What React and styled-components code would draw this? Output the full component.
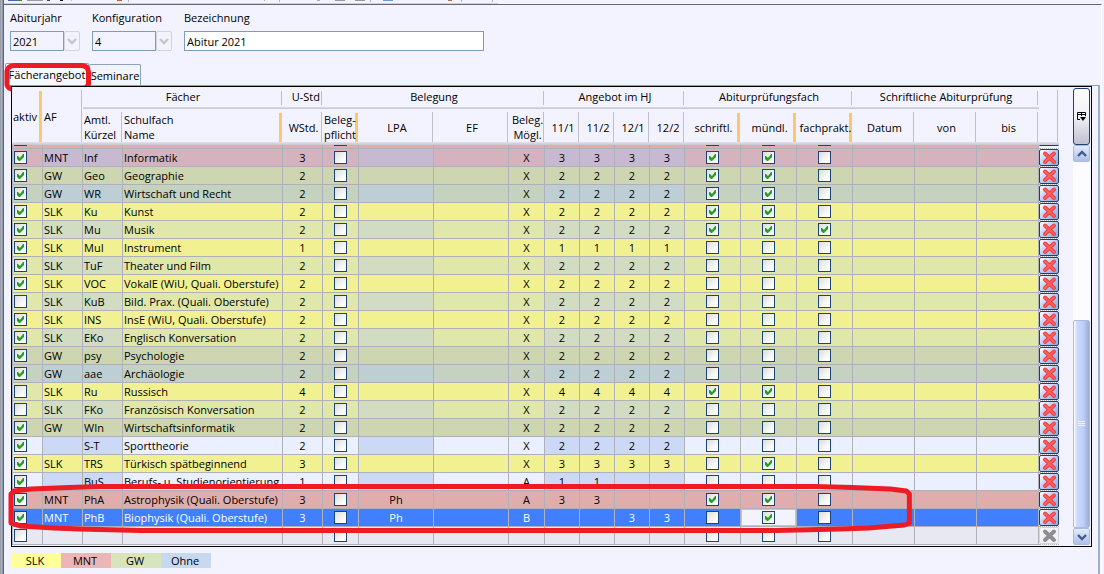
import React, { useState } from "react";
import styled, { createGlobalStyle, css } from "styled-components";

const GlobalStyle = createGlobalStyle`
  * {
    box-sizing: border-box;
  }

  body {
    margin: 0;
    background: #f3f3ff;
    color: #000;
    font-family: "Open Sans", "Noto Sans", sans-serif;
    font-size: 11px;
    line-height: 15px;
  }

  input, select, button {
    font: inherit;
    color: inherit;
  }
`;

const Page = styled.div`
  position: relative;
  display: flex;
  min-height: 100vh;
  overflow: hidden;
`;

const WindowEdge = styled.div`
  flex: none;
  width: 4px;
  background: linear-gradient(to right, #9c9ca4 1px, #a9b4cc 1px 2px, #8797b4 2px 3px, #5f6472 3px);
`;

const Main = styled.div`
  flex: 1;
  min-width: 0;
  display: flex;
  flex-direction: column;
`;

const Toolbar = styled.div`
  height: 4px;

  svg {
    display: block;
  }
`;

const Content = styled.div`
  flex: 1;
  display: flex;
  flex-direction: column;
  margin-right: 2px;
  padding-top: 5px;
  border-top: 1px solid #66666e;
  border-right: 1px solid #fff;
`;

const Form = styled.form`
  display: flex;
  gap: 12px;
  padding: 0 6px;
`;

const Field = styled.div`
  display: flex;
  flex-direction: column;
  gap: 6px;

  label {
    align-self: flex-start;
  }
`;

const Combo = styled.div`
  display: flex;
  height: 20px;
`;

const Select = styled.select`
  appearance: none;
  width: ${({ $width }) => $width}px;
  padding: 0 2px;
  border: 1px solid #7f9db9;
  border-radius: 0;
  background: #f3f3ff;
`;

const ComboArrow = styled.span`
  display: flex;
  align-items: center;
  justify-content: center;
  width: 16px;
  border: 1px solid #d3d3e0;
  border-radius: 2px;
  background: #f3f3fb;
`;

const TextInput = styled.input`
  width: 300px;
  height: 20px;
  padding: 0 2px;
  border: 1px solid #7f9db9;
  background: #fff;
`;

const Tabs = styled.div`
  position: relative;
  display: flex;
  align-items: flex-end;
  height: 22px;
  margin-top: 12px;
  padding-left: 1px;
`;

const Tab = styled.button`
  height: ${({ $active }) => ($active ? 22 : 21)}px;
  width: ${({ $active }) => ($active ? 84 : 52)}px;
  padding: 0;
  text-align: center;
  white-space: nowrap;
  border: 1px solid #8ba0bc;
  border-bottom: 0;
  border-radius: 2px 2px 0 0;
  background: ${({ $active }) => ($active ? "#f7f7ff" : "#f3f3fb")};
`;

const TabMark = styled.svg`
  position: absolute;
  top: -2px;
  left: -2px;
  pointer-events: none;
`;

const TabPanel = styled.div`
  flex: 1;
  margin: 0 1px;
  padding: 0 6px;
  border-top: 1px solid #8ba0bc;
  border-right: 2px solid #9fb0c8;
`;

const Frame = styled.div`
  position: relative;
  display: flex;
  padding-bottom: 1px;
  border: 1px solid #000;
`;

const RowMark = styled.svg`
  position: absolute;
  left: -5px;
  bottom: 12px;
  width: 84%;
  height: 52px;
  pointer-events: none;
`;

const Table = styled.table`
  flex: 1;
  min-width: 0;
  table-layout: fixed;
  border-collapse: separate;
  border-spacing: 0;
`;

const HeadCell = styled.th`
  height: 36px;
  padding: 0 0 0 1px;
  font-weight: normal;
  text-align: ${({ $left }) => ($left ? "left" : "center")};
  vertical-align: middle;
  white-space: nowrap;
  overflow: hidden;
  background:
    linear-gradient(#e4e4f0, #c4c4d2) left bottom / 100% 3px no-repeat,
    ${({ $mark }) =>
      $mark
        ? "linear-gradient(#ffc66b, #ffc66b) right 1px bottom 3px / 3px calc(100% - 7px) no-repeat"
        : "linear-gradient(#c0c0c8, #c0c0c8) right 1px bottom 3px / 1px calc(100% - 6px) no-repeat"},
    #f3f3ff;
`;

const GroupCell = styled(HeadCell)`
  height: 22px;
  padding: 0 0 4px;
  text-align: ${({ $narrow }) => ($narrow ? "right" : "center")};
  padding-right: ${({ $narrow }) => ($narrow ? 3 : 0)}px;
  background:
    linear-gradient(#c0c0c8, #c0c0c8) right 1px top 4px / 1px 14px no-repeat,
    linear-gradient(#d8d8e4, #c8c8d6) left bottom / 100% 2px no-repeat,
    #f3f3ff;
`;

const Cell = styled.td`
  height: 18px;
  padding: 0 1px;
  border-right: 1px solid #b0b0b8;
  border-bottom: 1px solid #b0b0b8;
  text-align: ${({ $center }) => ($center ? "center" : "left")};
  vertical-align: middle;
  white-space: nowrap;
  overflow: hidden;
  line-height: 17px;
  background: ${({ $bg }) => $bg};
  color: ${({ $selected }) => ($selected ? "#fff" : "#000")};

  &:first-child {
    border-left: 1px solid #b0b0b8;
  }

  ${({ $focus }) =>
    $focus &&
    css`
      box-shadow: inset 0 0 0 1px #c4c4d0;
    `}
`;

const DeleteCell = styled.td`
  height: 18px;
  padding: 0;
  border-bottom: 1px dotted #b0b0b8;
  background: #f3f3ff;
`;

const Sliver = styled.div`
  display: flex;
  flex-direction: column;
  justify-content: flex-end;
  align-items: ${({ $center }) => ($center ? "center" : "flex-start")};
  height: 3px;
  padding-bottom: 2px;
  overflow: hidden;
`;

const SliverRow = styled.tr`
  td {
    height: 4px;
    line-height: 0;
  }
`;

const Check = styled.input.attrs({ type: "checkbox" })`
  appearance: none;
  display: block;
  flex: none;
  width: 13px;
  height: 13px;
  margin: ${({ $left }) => ($left ? "0" : "0 auto")};
  border: 1px solid #1c4478;
  background: linear-gradient(135deg, #dcdcd8, #fff 80%);

  &:checked::after {
    content: "";
    display: block;
    width: 11px;
    height: 11px;
    background: #21a121;
    clip-path: polygon(2px 4px, 3px 4px, 5px 6px, 8px 2px, 9px 2px, 9px 5px, 5px 9px, 4px 9px, 2px 7px);
  }
`;

const DeleteButton = styled.button`
  display: flex;
  align-items: center;
  justify-content: center;
  width: 100%;
  height: 17px;
  padding: 0;
  border: 1px solid #1c3f74;
  border-radius: 2px;
  background: linear-gradient(135deg, #fff, #b9cbf0 50%, #8ea8dc);
  overflow: hidden;

  &:disabled {
    border-color: #d4d4dc;
    background: #f4f4f6;
  }
`;

const ScrollColumn = styled.div`
  flex: none;
  display: flex;
  flex-direction: column;
  width: 32px;
  padding: 1px 1px 0 14px;
`;

const ColumnButton = styled.button`
  display: flex;
  align-items: center;
  justify-content: center;
  height: 57px;
  padding: 0;
  border: 1px solid #1c3f74;
  border-radius: 3px;
  background: linear-gradient(#fff, #f0f0f6 50%, #c0c0d0);
`;

const ScrollTrack = styled.div`
  flex: 1;
  display: flex;
  flex-direction: column;
  background: #fcfcff;
`;

const ArrowButton = styled.button`
  display: flex;
  align-items: center;
  justify-content: center;
  height: 17px;
  padding: 0;
  border: 1px solid #a9bcdf;
  border-radius: 2px;
  background: linear-gradient(#e4ecfb, #adc0ea);
`;

const ScrollThumb = styled.div`
  display: flex;
  align-items: center;
  justify-content: center;
  height: 208px;
  margin-top: auto;
  border: 1px solid #a9bcdf;
  border-radius: 2px;
  background: linear-gradient(to right, #fff, #ccd9fa 20%, #c0d0f8 60%, #98aedb);
`;

const Legend = styled.div`
  display: grid;
  grid-template-columns: repeat(4, 50px);
  margin-top: 6px;
`;

const LegendItem = styled.span`
  height: 15px;
  padding-right: 2px;
  text-align: center;
  background: ${({ $bg }) => $bg};
`;

const columns = [31, 40, 40, 160, 40, 36, 75, 75, 36, 35, 35, 35, 35, 56, 56, 56, 62, 62, 62, 20];

const groups = [
  { title: "Fächer", span: 2 },
  { title: "U-Std", span: 1 },
  { title: "Belegung", span: 4 },
  { title: "Angebot im HJ", span: 4 },
  { title: "Abiturprüfungsfach", span: 3 },
  { title: "Schriftliche Abiturprüfung", span: 3 },
];

const heads = [
  { title: "Amtl.\nKürzel", left: true },
  { title: "Schulfach\nName", left: true, mark: true },
  { title: "WStd." },
  { title: "Beleg-\npflicht", left: true, mark: true },
  { title: "LPA" },
  { title: "EF" },
  { title: "Beleg.\nMögl." },
  { title: "11/1" },
  { title: "11/2" },
  { title: "12/1" },
  { title: "12/2" },
  { title: "schriftl.", mark: true },
  { title: "mündl.", mark: true },
  { title: "fachprakt.", mark: true },
  { title: "Datum" },
  { title: "von" },
  { title: "bis" },
];

// [cell colour, colour of the editable cells]
const tones = {
  MNT: ["#e0acac", "#e0acac"],
  MNT2: ["#d4b2be", "#c8b9d3"],
  GW: ["#cdd6b0", "#cdd6b0"],
  GW2: ["#c5d2c0", "#bdced4"],
  SLK: ["#f1f191", "#f1f191"],
  SLK2: ["#dfe7aa", "#d1dcc3"],
  Ohne2: ["#eaf0ff", "#ccd9f6"],
  selected: ["#4080ff", "#4080ff"],
  empty: ["#e8e8f2", "#e8e8f2"],
};

const row = (tone, active, af, code, name, hours, lpa, possible, terms, exams) => ({
  tone, active, af, code, name, hours, lpa, possible, terms, exams,
});

const rows = [
  row("MNT2", 1, "MNT", "Inf", "Informatik", "3", "", "X", ["3", "3", "3", "3"], [1, 1, 0]),
  row("GW", 1, "GW", "Geo", "Geographie", "2", "", "X", ["2", "2", "2", "2"], [1, 1, 0]),
  row("GW2", 1, "GW", "WR", "Wirtschaft und Recht", "2", "", "X", ["2", "2", "2", "2"], [1, 1, 0]),
  row("SLK", 1, "SLK", "Ku", "Kunst", "2", "", "X", ["2", "2", "2", "2"], [1, 1, 0]),
  row("SLK2", 1, "SLK", "Mu", "Musik", "2", "", "X", ["2", "2", "2", "2"], [1, 1, 1]),
  row("SLK", 1, "SLK", "MuI", "Instrument", "1", "", "X", ["1", "1", "1", "1"], [0, 0, 0]),
  row("SLK2", 1, "SLK", "TuF", "Theater und Film", "2", "", "X", ["2", "2", "2", "2"], [0, 0, 0]),
  row("SLK", 1, "SLK", "VOC", "VokalE (WiU, Quali. Oberstufe)", "2", "", "X", ["2", "2", "2", "2"], [0, 0, 0]),
  row("SLK2", 0, "SLK", "KuB", "Bild. Prax. (Quali. Oberstufe)", "2", "", "X", ["2", "2", "2", "2"], [0, 0, 0]),
  row("SLK", 1, "SLK", "INS", "InsE (WiU, Quali. Oberstufe)", "2", "", "X", ["2", "2", "2", "2"], [0, 0, 0]),
  row("SLK2", 1, "SLK", "EKo", "Englisch Konversation", "2", "", "X", ["2", "2", "2", "2"], [0, 0, 0]),
  row("GW", 1, "GW", "psy", "Psychologie", "2", "", "X", ["2", "2", "2", "2"], [0, 0, 0]),
  row("GW2", 1, "GW", "aae", "Archäologie", "2", "", "X", ["2", "2", "2", "2"], [0, 0, 0]),
  row("SLK", 0, "SLK", "Ru", "Russisch", "4", "", "X", ["4", "4", "4", "4"], [1, 1, 0]),
  row("SLK2", 0, "SLK", "FKo", "Französisch Konversation", "2", "", "X", ["2", "2", "2", "2"], [0, 0, 0]),
  row("GW", 1, "GW", "WIn", "Wirtschaftsinformatik", "2", "", "X", ["2", "2", "2", "2"], [0, 0, 0]),
  row("Ohne2", 1, "", "S-T", "Sporttheorie", "2", "", "X", ["2", "2", "2", "2"], [0, 0, 0]),
  row("SLK", 1, "SLK", "TRS", "Türkisch spätbeginnend", "3", "", "X", ["3", "3", "3", "3"], [0, 1, 0]),
  row("Ohne2", 1, "", "BuS", "Berufs- u. Studienorientierung", "1", "", "A", ["1", "1", "", ""], [0, 0, 0]),
  row("MNT", 1, "MNT", "PhA", "Astrophysik (Quali. Oberstufe)", "3", "Ph", "A", ["3", "3", "", ""], [1, 1, 0]),
  row("selected", 1, "MNT", "PhB", "Biophysik (Quali. Oberstufe)", "3", "Ph", "B", ["", "", "3", "3"], [0, 1, 0]),
  row("empty", 0, "", "", "", "", "", "", ["", "", "", ""], [0, 0, 0]),
];

const examNames = ["schriftlich", "mündlich", "fachpraktisch"];

const toolbarMarks = [
  [4, 14, "#3f67b8"], [14, 4, "#3f8a2f"], [23, 16, "#9a9a9a"], [43, 3, "#444"], [56, 3, "#111"],
  [67, 1, "#bbb"], [113, 5, "#c8602c"], [260, 1, "#8c8"], [313, 3, "#aaa"], [331, 10, "#999"],
  [351, 10, "#999"], [379, 10, "#6a9bd0"], [444, 4, "#b07c3c"],
];

const toolbarLines = [124, 275, 366, 457, 488];

const CrossIcon = ({ disabled }) => (
  <svg width="15" height="15" viewBox="0 0 15 15">
    <path
      d="M3 3.5L12 12M12 3.5L3 12"
      stroke={disabled ? "#8e8e8e" : "#e8404a"}
      strokeWidth="4"
      strokeLinecap="round"
    />
    {!disabled && (
      <path d="M3 3.5L12 12M12 3.5L3 12" stroke="#ff6058" strokeWidth="2" strokeLinecap="round" />
    )}
  </svg>
);

const Chevron = ({ up, color = "#3f5c8c" }) => (
  <svg width="10" height="8" viewBox="0 0 10 8" fill="none">
    <path d={up ? "M1 6L5 2L9 6" : "M1 2L5 6L9 2"} stroke={color} strokeWidth="2.4" />
  </svg>
);

const SubjectRow = ({ item }) => {
  const [base, edit] = tones[item.tone];
  const selected = item.tone === "selected";
  const label = item.name || "Neues Fach";
  // yellow rows keep the darker tone in their first cell while inactive
  const activeBg = item.tone === "SLK" && !item.active ? tones.SLK2[0] : base;

  return (
    <tr>
      <Cell $bg={activeBg}>
        <Check $left defaultChecked={!!item.active} aria-label={`${label} aktiv`} />
      </Cell>
      <Cell $bg={edit} $selected={selected}>{item.af}</Cell>
      <Cell $bg={edit} $selected={selected}>{item.code}</Cell>
      <Cell $bg={base} $selected={selected}>{item.name}</Cell>
      <Cell $bg={base} $selected={selected} $center>{item.hours}</Cell>
      <Cell $bg={base}>
        <Check aria-label={`${label} Belegpflicht`} />
      </Cell>
      <Cell $bg={edit} $selected={selected} $center>{item.lpa}</Cell>
      <Cell $bg={base} />
      <Cell $bg={base} $selected={selected} $center>{item.possible}</Cell>
      {item.terms.map((term, i) => (
        <Cell key={i} $bg={edit} $selected={selected} $center>{term}</Cell>
      ))}
      {item.exams.map((exam, i) => {
        const focus = selected && i === 1;
        return (
          <Cell key={i} $bg={focus ? "#f3f3ff" : base} $focus={focus}>
            <Check defaultChecked={!!exam} aria-label={`${label} ${examNames[i]}`} />
          </Cell>
        );
      })}
      <Cell $bg={base} />
      <Cell $bg={base} />
      <Cell $bg={base} />
      <DeleteCell>
        <DeleteButton disabled={!item.name} aria-label={`${label} löschen`}>
          <CrossIcon disabled={!item.name} />
        </DeleteButton>
      </DeleteCell>
    </tr>
  );
};

const ScrolledRow = () => (
  <SliverRow aria-hidden="true">
    {columns.slice(0, -1).map((_, i) => (
      <Cell key={i} $bg={tones.MNT[0]}>
        <Sliver $center={i > 0}>
          {[0, 5, 13, 14, 15].includes(i) && <Check $left={i === 0} tabIndex={-1} />}
        </Sliver>
      </Cell>
    ))}
    <DeleteCell>
      <Sliver>
        <DeleteButton tabIndex={-1} />
      </Sliver>
    </DeleteCell>
  </SliverRow>
);

const SubjectTable = () => (
  <Table>
    <colgroup>
      {columns.map((width, i) => (
        <col key={i} width={width} />
      ))}
    </colgroup>
    <thead>
      <tr>
        <HeadCell rowSpan={2} $left $mark>aktiv</HeadCell>
        <HeadCell rowSpan={2} $left>AF</HeadCell>
        {groups.map(({ title, span }) => (
          <GroupCell key={title} colSpan={span} $narrow={span === 1}>{title}</GroupCell>
        ))}
        <HeadCell rowSpan={2} />
      </tr>
      <tr>
        {heads.map(({ title, left, mark }) => (
          <HeadCell key={title} $left={left} $mark={mark}>
            {title.split("\n").map((line) => (
              <div key={line}>{line}</div>
            ))}
          </HeadCell>
        ))}
      </tr>
    </thead>
    <tbody>
      <ScrolledRow />
      {rows.map((item, i) => (
        <SubjectRow key={i} item={item} />
      ))}
    </tbody>
  </Table>
);

const App = () => {
  const [tab, setTab] = useState("subjects");

  return (
    <>
      <GlobalStyle />
      <Page>
        <WindowEdge />
        <Main>
          <Toolbar>
            <svg width="500" height="4">
              {toolbarMarks.map(([x, width, fill]) => (
                <rect key={x} x={x} width={width} height="1" fill={fill} />
              ))}
              {toolbarLines.map((x) => (
                <rect key={x} x={x} width="1" height="2" fill="#b4b4c0" />
              ))}
              <rect y="3" width="494" height="1" fill="#d0d0dc" />
            </svg>
          </Toolbar>
          <Content>
            <Form>
              <Field>
                <label htmlFor="year">Abiturjahr</label>
                <Combo>
                  <Select id="year" $width={54}>
                    <option>2021</option>
                  </Select>
                  <ComboArrow><Chevron color="#c4c4cc" /></ComboArrow>
                </Combo>
              </Field>
              <Field>
                <label htmlFor="config">Konfiguration</label>
                <Combo>
                  <Select id="config" $width={64}>
                    <option>4</option>
                  </Select>
                  <ComboArrow><Chevron color="#c4c4cc" /></ComboArrow>
                </Combo>
              </Field>
              <Field>
                <label htmlFor="title">Bezeichnung</label>
                <TextInput id="title" defaultValue="Abitur 2021" />
              </Field>
            </Form>
            <Tabs role="tablist">
              <Tab role="tab" aria-selected={tab === "subjects"} $active onClick={() => setTab("subjects")}>
                Fächerangebot
              </Tab>
              <Tab role="tab" aria-selected={tab === "seminars"} onClick={() => setTab("seminars")}>
                Seminare
              </Tab>
              <TabMark width="92" height="34" viewBox="0 0 92 34" fill="none">
                <path
                  d="M12 4.500Q6 5 5 10V24Q6 28 12 28.500H78Q85 28 86.500 23V11Q86 5 80 4.500Z"
                  stroke="#ed1c24"
                  strokeWidth="5"
                />
              </TabMark>
            </Tabs>
            <TabPanel>
              <Frame>
                <SubjectTable />
                <ScrollColumn>
                  <ColumnButton aria-label="Spalten">
                    <svg width="11" height="11" viewBox="0 0 11 11" fill="none">
                      <path d="M4 8.500H1.500V1.500H9.500V5M1.500 3.500H9.500M5.500 1.500V5" stroke="#000" />
                      <path d="M4 6H10L7 10Z" fill="#000" />
                    </svg>
                  </ColumnButton>
                  <ScrollTrack>
                    <ArrowButton aria-label="Nach oben"><Chevron up /></ArrowButton>
                    <ScrollThumb>
                      <svg width="8" height="8">
                        <path d="M0 1.500H7M0 3.500H7M0 5.500H7" stroke="#eef4fe" />
                      </svg>
                    </ScrollThumb>
                    <ArrowButton aria-label="Nach unten"><Chevron /></ArrowButton>
                  </ScrollTrack>
                </ScrollColumn>
                <RowMark viewBox="0 0 907 52" preserveAspectRatio="none" fill="none">
                  <path
                    d="M4 12L7 9L24 7L62 5.500L94 4.500H808L846 5.500L884 7L900 9L903 12V41L898 43L862 46L834 47L769 48.500H134L72 47L47 46L14 44L4 41Z"
                    stroke="#ed1c24"
                    strokeWidth="5"
                    strokeLinejoin="round"
                  />
                </RowMark>
              </Frame>
              <Legend>
                <LegendItem $bg="#ffff99">SLK</LegendItem>
                <LegendItem $bg="#ecb6b6">MNT</LegendItem>
                <LegendItem $bg="#d7e4bc">GW</LegendItem>
                <LegendItem $bg="#c6d9f1">Ohne</LegendItem>
              </Legend>
            </TabPanel>
          </Content>
        </Main>
      </Page>
    </>
  );
};

export default App;
